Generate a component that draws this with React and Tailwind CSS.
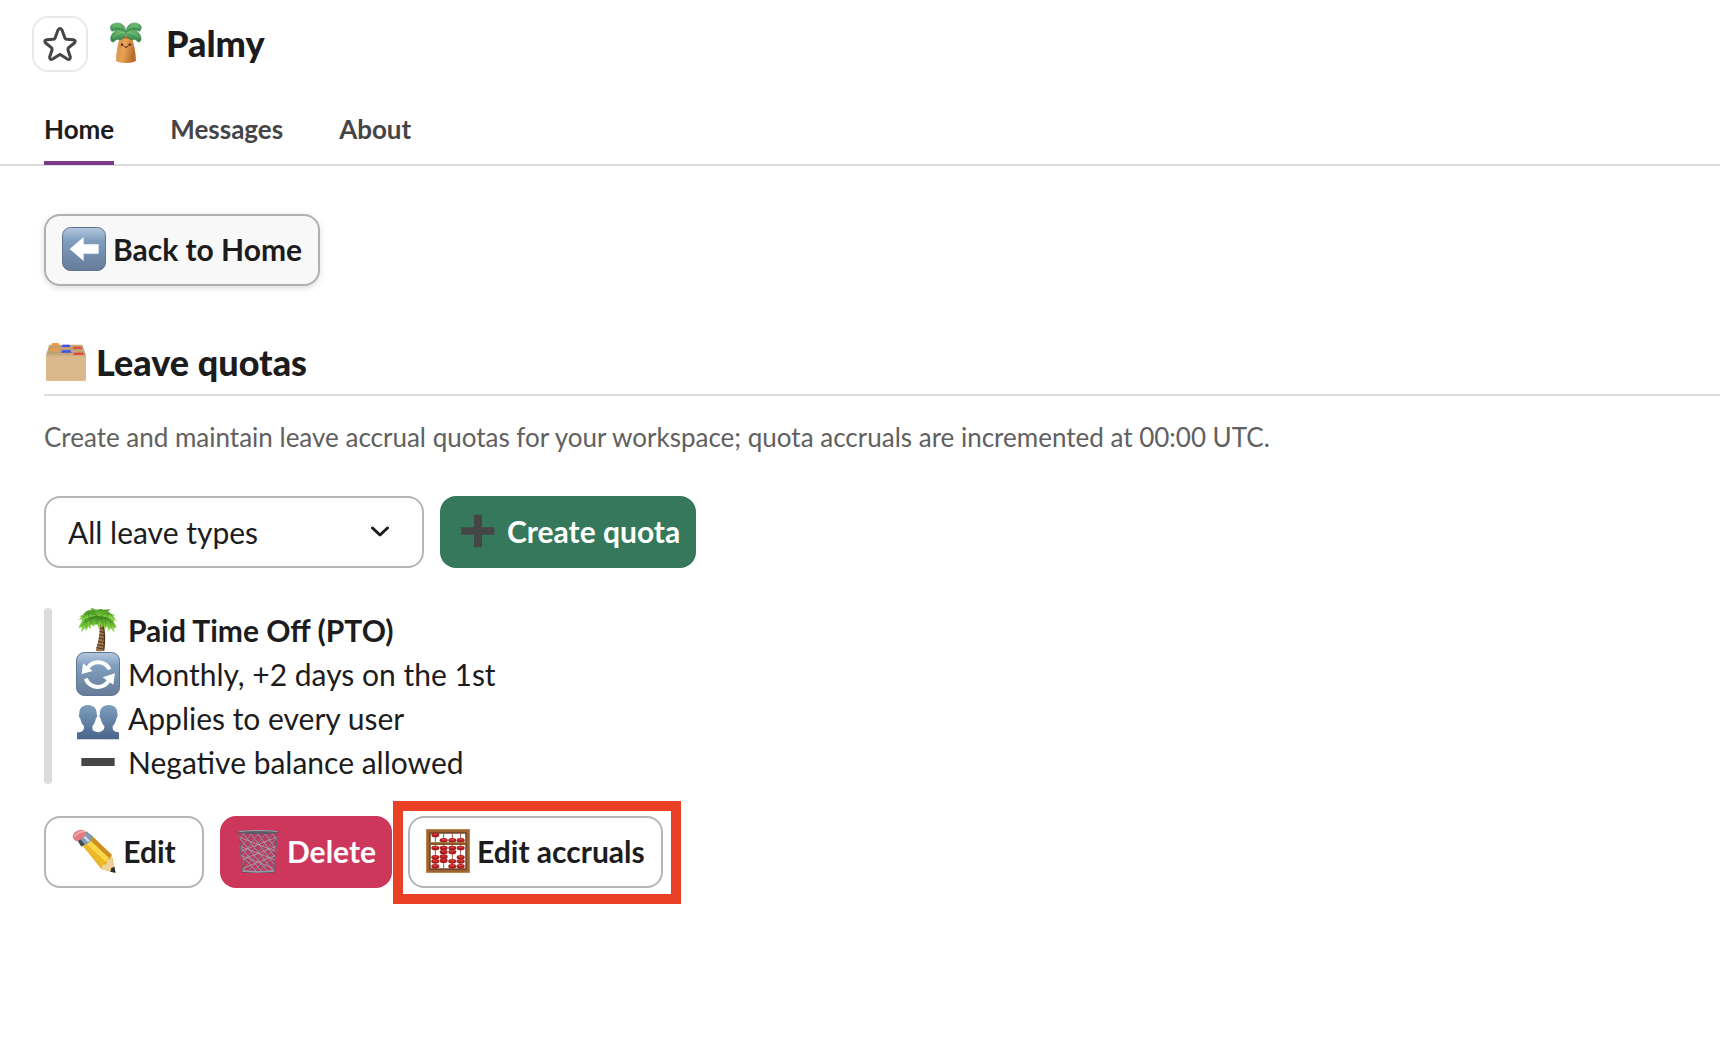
import React, { useState } from 'react';
import clsx from 'clsx';

const Icon = ({ children, className = 'size-11', box = 132 }) => (
    <svg viewBox={`0 0 ${box} ${box}`} className={clsx('shrink-0', className)} aria-hidden="true">
        {children}
    </svg>
);

const StarIcon = () => (
    <svg viewBox="0 0 102 102" className="size-[34px]" fill="none" stroke="#454447" strokeWidth="9" strokeLinejoin="round" aria-hidden="true">
        <path d="M45 9 Q51 0 57 9 L66 34 Q67 37 71 37 L91 38 Q100 40 94 48 L77 62 Q74 65 75 69 L82 90 Q82 100 73 96 L54 84 Q51 81 48 84 L29 96 Q20 100 20 90 L27 69 Q28 65 25 62 L8 48 Q2 40 11 38 L31 37 Q35 37 36 34 Z" />
    </svg>
);

const PalmyIcon = () => (
    <Icon className="size-12" box={144}>
        <defs>
            <linearGradient id="palmy-trunk" x1="0" x2="1" y1="0" y2="0.3">
                <stop offset="0" stopColor="#d58a3e" />
                <stop offset="0.5" stopColor="#e9a456" />
                <stop offset="1" stopColor="#b96a29" />
            </linearGradient>
            <linearGradient id="palmy-leaf" x1="0" x2="0" y1="0" y2="1">
                <stop offset="0" stopColor="#6fbd70" />
                <stop offset="1" stopColor="#2f7d45" />
            </linearGradient>
        </defs>
        <path d="M55 50 H88 C96 76 101 99 102 123 Q102 131 72 132 Q42 131 42 124 C43 99 47 76 55 50Z" fill="url(#palmy-trunk)" />
        <path d="M53 56 Q72 42 91 57 L92 64 Q72 53 52 64Z" fill="#8f4d20" opacity="0.6" />
        <g fill="url(#palmy-leaf)" stroke="#347f48" strokeWidth="1.5">
            <path d="M72 42 C72 12 45 5 28 18 C23 24 25 31 30 37 C45 30 61 33 72 42Z" />
            <path d="M72 42 C72 12 98 5 115 18 C120 24 118 31 113 37 C98 30 83 33 72 42Z" />
            <path d="M72 40 C55 24 33 34 27 52 C24 63 27 70 35 69 C41 61 46 61 54 62 C64 61 71 51 72 40Z" />
            <path d="M72 40 C89 24 110 34 116 52 C119 63 116 70 108 69 C102 61 97 61 89 62 C79 61 73 51 72 40Z" />
        </g>
        <g fill="none" stroke="#96d28e" strokeWidth="2" strokeLinecap="round" opacity="0.8">
            <path d="M33 24 Q53 14 69 33" />
            <path d="M110 24 Q91 14 75 33" />
            <path d="M33 56 Q46 39 68 41" />
            <path d="M110 56 Q98 39 76 41" />
        </g>
        <circle cx="60" cy="77" r="3.5" fill="#37221a" />
        <circle cx="83" cy="77" r="3.5" fill="#37221a" />
        <path d="M66 81 Q72 90 78 81" fill="none" stroke="#4b291a" strokeWidth="3" strokeLinecap="round" />
        <circle cx="57" cy="84" r="3.5" fill="#ef8157" opacity="0.7" />
        <circle cx="87" cy="84" r="3.5" fill="#ef8157" opacity="0.7" />
    </Icon>
);

const BlueTile = ({ id, children }) => (
    <Icon>
        <defs>
            <linearGradient id={id} x1="0" x2="0" y1="0" y2="1">
                <stop offset="0" stopColor="#b4c8de" />
                <stop offset="0.15" stopColor="#9bb4cf" />
                <stop offset="0.3" stopColor="#809fbf" />
                <stop offset="1" stopColor="#667b98" />
            </linearGradient>
        </defs>
        <rect x="1.5" y="1.5" width="129" height="129" rx="24" fill={`url(#${id})`} stroke="#5f7590" strokeWidth="3" />
        {children}
    </Icon>
);

const BackIcon = () => (
    <BlueTile id="back-tile">
        <path d="M23 66 L65 30 V52 H110 V80 H65 V102Z" fill="#fff" />
    </BlueTile>
);

const RefreshIcon = () => (
    <BlueTile id="refresh-tile">
        <g fill="none" stroke="#fff" strokeWidth="12">
            <path d="M101 52 C87 26 51 22 33 50" />
            <path d="M29 80 C43 112 85 113 100 83" />
        </g>
        <path d="M21 34 L17 66 L50 57Z" fill="#fff" />
        <path d="M117 64 L112 98 L80 76Z" fill="#fff" />
    </BlueTile>
);

const CabinetIcon = () => (
    <Icon>
        <path d="M16 14 H115 L126 46 H6Z" fill="#c5a67b" />
        <path d="M14 21 H118 M12 28 H120 M9 37 H123" stroke="#a98b62" strokeWidth="1.5" />
        <path d="M22 17 L25 9 H43 L46 17Z" fill="#f09a42" />
        <path d="M53 21 L56 14 H76 L79 21Z" fill="#3a50f2" />
        <path d="M86 26 L89 20 H111 L114 26Z" fill="#e5453d" />
        <path d="M15 32 L19 25 H43 L46 32Z" fill="#f09a42" />
        <path d="M51 38 L55 31 H79 L83 38Z" fill="#3a50f2" />
        <path d="M87 46 L91 38 H117 L121 46Z" fill="#e5453d" />
        <rect x="6" y="46" width="120" height="77" rx="3" fill="#d9b98b" />
        <path d="M7 47 H125" stroke="#c4a272" strokeWidth="2" />
        <path d="M8 122 H124" stroke="#e9c9a0" strokeWidth="2" />
    </Icon>
);

const PlusIcon = () => (
    <Icon>
        <path d="M54 17 H78 V55 H115 V77 H78 V115 H54 V77 H16 V55 H54Z" fill="#464646" />
    </Icon>
);

const MinusIcon = () => (
    <Icon>
        <rect x="16" y="54" width="100" height="24" fill="#464646" />
    </Icon>
);

const PalmTreeIcon = () => (
    <Icon>
        <defs>
            <linearGradient id="tree-leaf" x1="0" x2="0" y1="0" y2="1">
                <stop offset="0" stopColor="#3f8c20" />
                <stop offset="0.5" stopColor="#76c53a" />
                <stop offset="1" stopColor="#a2e35c" />
            </linearGradient>
        </defs>
        <path d="M67 34 C74 58 71 92 59 128 Q72 132 84 128 C88 94 87 61 77 34Z" fill="#9b7548" />
        <path d="M80 46 C87 72 87 100 83 128" fill="none" stroke="#4d3722" strokeWidth="4" />
        <path d="M70 50 L83 54 M71 60 L85 64 M71 70 L86 74 M70 80 L86 84 M68 90 L86 94 M66 100 L85 104 M63 110 L84 114 M61 119 L83 123" stroke="#51371f" strokeWidth="3" />
        <path d="M34 12 Q68 -4 100 12 L116 34 Q108 52 96 50 L84 46 L72 52 L60 48 L46 50 Q28 52 20 44 L16 30Z" fill="#5fae2c" />
        <g fill="url(#tree-leaf)">
            <path d="M72 27 C57 2 32 1 20 21 L10 25 L17 27 L7 36 L19 33 L15 43 L27 33 L32 39 L36 30 L44 34 L50 27Z" />
            <path d="M70 25 C60 11 52 4 39 4 L50 1 L67 12 L73 3 L82 5 L103 4 L94 12 L117 22 L109 24 L123 38 L110 35 L109 42 L99 33 L91 37 L85 29Z" />
            <path d="M71 25 C48 20 24 31 11 51 L8 61 L18 57 L15 74 L27 60 L30 70 L37 55 L43 65 L45 49 L55 57 L55 43 L65 45Z" />
            <path d="M70 25 C97 23 117 39 122 61 L113 57 L116 74 L104 61 L98 70 L93 55 L86 65 L82 50 L75 58 L72 43Z" />
            <path d="M63 29 L56 52 L64 49 L68 64 L73 49 L82 57 L80 31Z" />
        </g>
        <g fill="none" stroke="#2f7418" strokeWidth="2" opacity="0.7">
            <path d="M68 26 Q42 6 19 29" />
            <path d="M70 27 Q37 26 17 56" />
            <path d="M72 25 Q96 7 116 31" />
            <path d="M73 27 Q105 30 117 60" />
            <path d="M70 29 Q60 40 62 48 M75 29 Q83 40 80 52" />
            <path d="M36 15 L40 31 M29 31 L31 59 M43 27 L46 48 M96 12 L93 30 M87 28 L90 51 M102 36 L106 58" />
        </g>
    </Icon>
);

const PeopleIcon = () => (
    <Icon>
        <defs>
            <linearGradient id="people-fill" x1="0" x2="0" y1="0" y2="1">
                <stop offset="0" stopColor="#7d9fbd" />
                <stop offset="1" stopColor="#49658a" />
            </linearGradient>
        </defs>
        <g fill="url(#people-fill)">
            <path d="M36 27 C18 27 9 38 10 54 C7 57 9 64 13 68 C15 79 20 86 24 90 C25 105 18 108 3 109 V130 H90 V116 C78 110 58 110 50 102 L49 90 C55 84 58 76 60 67 C64 63 65 57 62 54 C63 38 53 27 36 27Z" />
            <path d="M98 27 C80 27 71 38 72 54 C69 57 70 64 74 68 C76 78 80 85 85 90 C86 102 80 106 64 109 C78 112 86 117 88 130 H129 V109 C114 107 109 104 110 90 C116 84 120 76 121 68 C125 63 126 57 124 54 C125 38 116 27 98 27Z" />
        </g>
    </Icon>
);

const PencilIcon = () => (
    <Icon>
        <path d="M28 45 L56 17 L119 77 L130 128 Q131 132 126 131 L88 120Z" fill="#dca719" />
        <path d="M36 39 L47 28 L112 87 L101 100Z" fill="#f9d74a" />
        <path d="M28 46 L36 39 L101 100 L91 120Z" fill="#edb827" />
        <path d="M48 26 L56 17 L119 77 L112 87Z" fill="#cc8f20" />
        <path d="M88 120 L93 107 L103 106 L105 94 L114 91 L118 77 L130 131Z" fill="#eed29a" />
        <path d="M118 117 L127 113 L131 131 L115 128Z" fill="#2d2d33" />
        <path d="M15 32 L44 7 L62 22 Q61 41 31 51Z" fill="#8299b2" />
        <path d="M15 32 L22 27 L38 46 L28 53Z" fill="#44484f" />
        <path d="M30 20 L35 16 L54 35 L48 40Z" fill="#cfdae5" />
        <path d="M4 29 Q-1 19 8 10 Q24 -3 38 6 L43 11 Q42 21 31 28 Q20 37 12 37Z" fill="#df7d80" />
        <path d="M8 22 Q19 8 35 7" fill="none" stroke="#f5aaa8" strokeWidth="6" strokeLinecap="round" />
    </Icon>
);

const TrashIcon = () => (
    <Icon>
        <defs>
            <clipPath id="basket-clip">
                <path d="M6 12 H126 L116 128 H19Z" />
            </clipPath>
        </defs>
        <path d="M8 12 H126 L116 126 H19Z" fill="#7d4a60" opacity="0.25" />
        <g clipPath="url(#basket-clip)" fill="none">
            <path d="M-46 12 L62 128 M-24 12 L78 128 M-2 12 L96 128 M20 12 L114 128 M42 12 L132 128 M64 12 L148 128 M86 12 L166 128 M108 12 L184 128" stroke="#9a9aab" strokeWidth="3" />
            <path d="M178 12 L70 128 M156 12 L54 128 M134 12 L36 128 M112 12 L18 128 M90 12 L0 128 M68 12 L-16 128 M46 12 L-34 128 M24 12 L-52 128" stroke="#85859a" strokeWidth="3" />
            <path d="M4 22 L126 70 M2 48 L126 96 M8 76 L122 122 M128 22 L6 70 M130 48 L8 96 M126 76 L12 122" stroke="#b3b0be" strokeWidth="2" />
        </g>
        <path d="M9 14 L20 127 M124 14 L114 127" stroke="#65616f" strokeWidth="3" />
        <path d="M20 122 Q66 130 114 122 V129 Q66 135 20 129Z" fill="#9899a7" />
        <path d="M20 130 Q66 135 114 130" fill="none" stroke="#494c56" strokeWidth="2" />
        <ellipse cx="67" cy="9" rx="62" ry="6" fill="#5b5c68" />
        <ellipse cx="67" cy="7" rx="60" ry="4" fill="#9fa2ac" />
        <ellipse cx="67" cy="9" rx="54" ry="2.5" fill="#4c4c57" />
    </Icon>
);

const abacusRods = [
    { x: 28, beads: [18, 57, 85, 97, 112] },
    { x: 53, beads: [34, 57, 69, 83, 95] },
    { x: 79, beads: [34, 57, 69, 97, 112] },
    { x: 104, beads: [34, 57, 85, 97, 112] },
];

const AbacusIcon = () => (
    <Icon>
        <rect x="6" y="6" width="120" height="120" fill="none" stroke="#9c6430" strokeWidth="11" />
        <rect x="2" y="2" width="128" height="128" fill="none" stroke="#c48a4b" strokeWidth="2" />
        <rect x="12" y="12" width="108" height="108" fill="none" stroke="#5c3214" strokeWidth="4" />
        {abacusRods.map(({ x, beads }) => (
            <g key={x}>
                <path d={`M${x} 12 V120`} stroke="#9c5a45" strokeWidth="3" />
                {beads.map((y) => (
                    <g key={y}>
                        <ellipse cx={x} cy={y} rx="12" ry="7" fill="#a81e1e" />
                        <ellipse cx={x} cy={y - 2} rx="7" ry="2.5" fill="#dc3c34" />
                    </g>
                ))}
            </g>
        ))}
        <rect x="9" y="40" width="114" height="8" fill="#85562a" />
        <path d="M10 41 H122" stroke="#b47d43" strokeWidth="2" />
    </Icon>
);

const variants = {
    default: 'border-2 border-[#b5b5b5] bg-white text-[#1d1c1d]',
    raised: 'border-2 border-[#b0b0b0] bg-[#f8f8f8] text-[#1d1c1d] shadow-[0_2px_6px_rgba(0,0,0,0.14)]',
    primary: 'bg-[#35785b] text-white',
    danger: 'bg-[#cd375c] text-white',
};

const Button = ({ icon, variant = 'default', children }) => (
    <button
        type="button"
        className={clsx(
            'flex h-18 min-w-40 items-center justify-center gap-[7px] rounded-2xl px-4 pb-0.5 text-[30px] leading-11 font-bold whitespace-nowrap',
            variants[variant]
        )}
    >
        {icon}
        <span>{children}</span>
    </button>
);

const tabs = ['Home', 'Messages', 'About'];

const quotaDetails = [
    { icon: <PalmTreeIcon />, label: 'Paid Time Off (PTO)', bold: true },
    { icon: <RefreshIcon />, label: 'Monthly, +2 days on the 1st' },
    { icon: <PeopleIcon />, label: 'Applies to every user' },
    { icon: <MinusIcon />, label: 'Negative balance allowed' },
];

const App = () => {
    const [activeTab, setActiveTab] = useState('Home');

    return (
        <div className="min-h-screen overflow-x-hidden bg-white font-['Lato',sans-serif] text-[#1d1c1d]">
            <header>
                <div className="flex items-center px-8 pt-4">
                    <button type="button" aria-label="Add to starred" className="flex size-14 items-center justify-center rounded-2xl border-2 border-[#e8e8e8]">
                        <StarIcon />
                    </button>
                    <div className="ml-3.5 flex items-center gap-4 pb-0.5">
                        <PalmyIcon />
                        <h1 className="text-[36px] leading-11 font-black">Palmy</h1>
                    </div>
                </div>
                <nav className="mt-6 flex gap-14 border-b-2 border-[#dddddd] px-11">
                    {tabs.map((tab) => (
                        <button
                            key={tab}
                            type="button"
                            onClick={() => setActiveTab(tab)}
                            className={clsx(
                                '-mb-px h-[69px] border-b-4 text-[26px] leading-9 font-bold',
                                activeTab === tab ? 'border-[#7c3a8c] text-[#1d1c1d]' : 'border-transparent text-[#454447]'
                            )}
                        >
                            {tab}
                        </button>
                    ))}
                </nav>
            </header>

            <main className="pt-12 pl-11">
                <div className="flex">
                    <Button icon={<BackIcon />} variant="raised">Back to Home</Button>
                </div>

                <h2 className="mt-[54px] flex items-center gap-2 border-b-2 border-[#dddddd] pb-2.5 text-[36px] leading-11 font-black">
                    <CabinetIcon />
                    <span>Leave quotas</span>
                </h2>
                <p className="mt-[23px] text-[26px] leading-9 text-[#616061]">
                    Create and maintain leave accrual quotas for your workspace; quota accruals are incremented at 00:00 UTC.
                </p>

                <div className="mt-[41px] flex gap-4">
                    <div className="relative w-[380px]">
                        <select
                            aria-label="Leave type"
                            className="h-18 w-full appearance-none rounded-2xl border-2 border-[#b5b5b5] bg-white pr-16 pl-[22px] text-[30px] leading-11"
                        >
                            <option>All leave types</option>
                        </select>
                        <svg viewBox="0 0 20 12" className="pointer-events-none absolute top-[30px] right-[34px] h-3 w-5" fill="none" stroke="#1d1c1d" strokeWidth="3" strokeLinecap="round" strokeLinejoin="round" aria-hidden="true">
                            <path d="M2.5 2 L10 9 L17.5 2" />
                        </svg>
                    </div>
                    <Button icon={<PlusIcon />} variant="primary">Create quota</Button>
                </div>

                {/* Quota summary */}
                <div className="mt-10 flex gap-6">
                    <div className="w-2 rounded-full bg-[#dddddd]" />
                    <ul className="text-[30px] leading-11">
                        {quotaDetails.map(({ icon, label, bold }) => (
                            <li key={label} className={clsx('flex items-center gap-2', bold && 'font-bold')}>
                                {icon}
                                <span>{label}</span>
                            </li>
                        ))}
                    </ul>
                </div>

                {/* Actions */}
                <div className="mt-8 flex gap-4 pb-16">
                    <Button icon={<PencilIcon />}>Edit</Button>
                    <Button icon={<TrashIcon />} variant="danger">Delete</Button>
                    <div className="relative">
                        <Button icon={<AbacusIcon />}>Edit accruals</Button>
                        <div className="pointer-events-none absolute -top-[15px] -right-[18px] -bottom-4 -left-[15px] border-10 border-[#ea4025]" />
                    </div>
                </div>
            </main>
        </div>
    );
};

export default App;
